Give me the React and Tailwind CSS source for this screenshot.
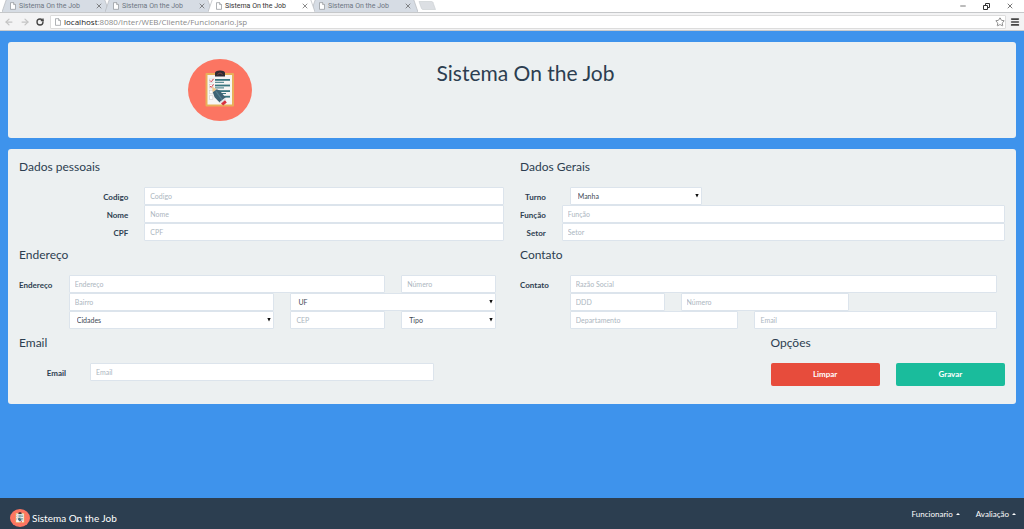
import { Menu, Minus, RotateCw, Star, X, ArrowLeft, ArrowRight } from 'lucide-react'
import clsx from 'clsx'

const TABS = [
  { id: 1, active: false },
  { id: 2, active: false },
  { id: 3, active: true },
  { id: 4, active: false },
]

const CONTROL =
  'block h-[18px] w-full min-w-0 rounded-[1px] border border-[#dce4ec] bg-white text-[7px] leading-4 text-[#3f4a55] outline-none'

function PageIcon({ className }) {
  return (
    <svg viewBox="0 0 7 9" className={className} fill="#fff" stroke="#8b8f94" strokeWidth="0.8" aria-hidden="true">
      <path d="M.6.6h3.6L6.4 2.8v5.6H.6z" />
      <path d="M4.2.6v2.2h2.2" />
    </svg>
  )
}

function RestoreIcon({ className }) {
  return (
    <svg viewBox="0 0 7 7" className={className} fill="none" stroke="currentColor" strokeWidth="1" aria-hidden="true">
      <path d="M2.5 2V.5h4v4H5" />
      <path d="M.5 2.5h4v4h-4z" />
    </svg>
  )
}

function Logo({ className }) {
  return (
    <svg viewBox="0 0 64 62" preserveAspectRatio="none" className={className} aria-hidden="true">
      <ellipse cx="32" cy="31" rx="32" ry="31" fill="#fc7562" />
      <rect x="17.5" y="14" width="28.5" height="33.5" rx="1" fill="#e9b05a" />
      <rect x="19.5" y="16" width="24.5" height="29.5" fill="#f6f5f4" />
      <path d="M27 17.5v-3.4q0-2.6 5-2.6t5 2.6v3.4z" fill="#2e2b33" />
      <path d="M29.4 15.4q2.6-3 5.2 0" fill="none" stroke="#8d4a47" strokeWidth="0.9" />
      <g fill="#38757f">
        <rect x="27" y="20" width="15" height="1.8" />
        <rect x="27" y="22.8" width="9" height="1" />
        <rect x="27" y="25.6" width="15" height="1.8" />
        <rect x="27" y="28.4" width="9" height="1" />
        <rect x="29" y="31.2" width="13" height="1.8" />
        <rect x="33" y="34" width="5" height="1" />
        <rect x="34" y="36.8" width="8" height="1.8" />
      </g>
      <g fill="#fff" stroke="#c9c4c8" strokeWidth="0.5">
        <rect x="21.5" y="20" width="3.4" height="3.4" />
        <rect x="21.5" y="25.6" width="3.4" height="3.4" />
        <rect x="21.5" y="31.2" width="3.4" height="3.4" />
        <rect x="21.5" y="36.8" width="3.4" height="3.4" />
      </g>
      <path d="M22 21.4l1.2 1.4 2.4-3M22 27l1.2 1.4 2.4-3" fill="none" stroke="#d8434e" strokeWidth="1" />
      <path d="M24 27.6l.8 5.6 4-2.6z" fill="#f0c98d" />
      <path d="M24.8 33.2l4-3 3.2 1.6 5.6 7-6 4.6-5-5.2z" fill="#3f6375" />
      <path d="M28 32.4l6.2 8.4" stroke="#527c8d" strokeWidth="1.2" />
      <path d="M31.4 43.2l5.4-4.2 1.2 1.8-4.8 3.8z" fill="#dfe3e5" />
      <path d="M33 44.4l4-3.2 1.8 2.4-3.6 2.8z" fill="#d8323f" />
    </svg>
  )
}

function Tab({ active }) {
  return (
    <button type="button" className={clsx('relative -ml-1 flex h-[13px] w-[107px] items-center pr-1.5 pl-2 text-left', active && 'z-10')}>
      <svg viewBox="0 0 107 13" preserveAspectRatio="none" className="absolute inset-0 h-full w-full" aria-hidden="true">
        <path
          d="M0 13L4 1.4Q4.4.5 5.4.5H101.6Q102.6.5 103 1.4L107 13"
          fill={active ? '#fff' : '#d6dce4'}
          stroke="#b4b8bd"
          strokeWidth="0.7"
        />
      </svg>
      <PageIcon className="relative h-2 w-1.5 shrink-0" />
      <span className={clsx('relative ml-[3px] flex-1 whitespace-nowrap text-[7px] leading-3', active ? 'text-[#333]' : 'text-[#6d7682]')}>
        Sistema On the Job
      </span>
      <X className="relative h-2 w-2 shrink-0 text-[#555]" />
    </button>
  )
}

function BrowserBar() {
  return (
    <header className="shrink-0">
      <div className="flex h-[13px] items-end justify-between border-b border-[#c6c8ca] bg-white font-['Roboto',sans-serif]">
        <div className="flex pl-1.5">
          {TABS.map((tab) => (
            <Tab key={tab.id} active={tab.active} />
          ))}
          <svg viewBox="0 0 18 9" className="mt-0.5 h-[9px] w-[18px]" aria-hidden="true">
            <path d="M1 .5h12.5q1 0 1.4.8L17.5 8.5H5q-1 0-1.5-1z" fill="#dcdfe3" stroke="#c8ccd0" strokeWidth="0.6" />
          </svg>
        </div>
        <div className="flex items-center gap-4 self-center pr-2.5 text-[#333]">
          <button type="button" aria-label="Minimizar"><Minus className="h-2 w-2" /></button>
          <button type="button" aria-label="Restaurar"><RestoreIcon className="h-[7px] w-[7px]" /></button>
          <button type="button" aria-label="Fechar"><X className="h-2 w-2" /></button>
        </div>
      </div>
      <div className="flex h-[18px] items-center border-b border-[#c9cbcd] bg-[#f3f3f4] pl-1 font-['Open_Sans','Noto_Sans',sans-serif]">
        <button type="button" aria-label="Voltar" className="mr-1.5 text-[#c4c4c4]"><ArrowLeft className="h-2.5 w-2.5" strokeWidth={3} /></button>
        <button type="button" aria-label="Avançar" className="mr-1.5 text-[#c4c4c4]"><ArrowRight className="h-2.5 w-2.5" strokeWidth={3} /></button>
        <button type="button" aria-label="Recarregar" className="mr-1.5 text-[#444]"><RotateCw className="h-2 w-2" strokeWidth={4} /></button>
        <div className="flex h-[14px] flex-1 items-center rounded-[1px] border border-[#dcdcdc] bg-white pl-1">
          <PageIcon className="h-2 w-1.5" />
          <span className="ml-[3px] flex-1 text-[8px] leading-3 text-[#8a8a8a]">
            <span className="text-[#222]">localhost</span>:8080/Inter/WEB/Cliente/Funcionario.jsp
          </span>
          <Star className="h-2.5 w-2.5 text-[#777]" strokeWidth={2} />
        </div>
        <button type="button" aria-label="Menu" className="px-1 text-[#444]"><Menu className="h-2.5 w-2.5" strokeWidth={4} /></button>
      </div>
    </header>
  )
}

function Heading({ children }) {
  return <h2 className="mb-2.5 text-[12px] leading-5 text-[#2c3e50]">{children}</h2>
}

function Label({ htmlFor, className, children }) {
  return (
    <label htmlFor={htmlFor} className={clsx('pt-[3px] text-[8px] leading-[14px] font-bold whitespace-nowrap text-[#2c3e50]', className)}>
      {children}
    </label>
  )
}

function Field({ id, placeholder, className }) {
  return (
    <div className={className}>
      <input id={id} type="text" placeholder={placeholder} aria-label={placeholder} className={clsx(CONTROL, 'px-[5px] placeholder:text-[#acb6c0]')} />
    </div>
  )
}

function Select({ id, label, className }) {
  return (
    <div className={clsx('relative', className)}>
      <select id={id} aria-label={label} className={clsx(CONTROL, 'appearance-none px-[7px]')}>
        <option>{label}</option>
      </select>
      <svg viewBox="0 0 4 4" className="pointer-events-none absolute top-[7px] right-[3px] h-1 w-1" fill="#111" aria-hidden="true">
        <path d="M.3 0h3.4L2 3.6z" />
      </svg>
    </div>
  )
}

function DadosPessoais() {
  return (
    <section>
      <Heading>Dados pessoais</Heading>
      <div className="grid grid-cols-12 gap-x-4">
        <Label htmlFor="codigo" className="col-span-3 text-right">Codigo</Label>
        <Field id="codigo" placeholder="Codigo" className="col-span-9" />
        <Label htmlFor="nome" className="col-span-3 text-right">Nome</Label>
        <Field id="nome" placeholder="Nome" className="col-span-9" />
        <Label htmlFor="cpf" className="col-span-3 text-right">CPF</Label>
        <Field id="cpf" placeholder="CPF" className="col-span-9" />
      </div>
    </section>
  )
}

function DadosGerais() {
  return (
    <section>
      <Heading>Dados Gerais</Heading>
      <div className="grid grid-cols-12 gap-x-4">
        <Label htmlFor="turno" className="text-right">Turno</Label>
        <div className="col-span-11 grid grid-cols-12 gap-x-4 px-2">
          <Select id="turno" label="Manha" className="col-span-4" />
        </div>
        <Label htmlFor="funcao" className="text-right">Função</Label>
        <Field id="funcao" placeholder="Função" className="col-span-11" />
        <Label htmlFor="setor" className="text-right">Setor</Label>
        <Field id="setor" placeholder="Setor" className="col-span-11" />
      </div>
    </section>
  )
}

function Endereco() {
  return (
    <section>
      <Heading>Endereço</Heading>
      <div className="grid grid-cols-12 gap-x-4">
        <Label htmlFor="endereco">Endereço</Label>
        <div className="col-span-11 grid grid-cols-12 gap-x-4 px-2">
          <Field id="endereco" placeholder="Endereço" className="col-span-9" />
          <Field id="numero" placeholder="Número" className="col-span-3" />
          <Field id="bairro" placeholder="Bairro" className="col-span-6" />
          <Select id="uf" label="UF" className="col-span-6" />
          <Select id="cidades" label="Cidades" className="col-span-6" />
          <Field id="cep" placeholder="CEP" className="col-span-3" />
          <Select id="tipo" label="Tipo" className="col-span-3" />
        </div>
      </div>
    </section>
  )
}

function Contato() {
  return (
    <section>
      <Heading>Contato</Heading>
      <div className="grid grid-cols-12 gap-x-4">
        <Label htmlFor="razao">Contato</Label>
        <div className="col-span-11 grid grid-cols-12 gap-x-4 px-2">
          <Field id="razao" placeholder="Razão Social" className="col-span-12" />
          <Field id="ddd" placeholder="DDD" className="col-span-3" />
          <Field id="telefone" placeholder="Número" className="col-span-5" />
          <Field id="departamento" placeholder="Departamento" className="col-span-5 col-start-1" />
          <Field id="email-contato" placeholder="Email" className="col-span-7" />
        </div>
      </div>
    </section>
  )
}

function FooterLink({ children }) {
  return (
    <a href="#" className="flex items-center gap-[3px]">
      {children}
      <svg viewBox="0 0 4 2" className="h-0.5 w-1" fill="currentColor" aria-hidden="true">
        <path d="M0 2L2 0l2 2z" />
      </svg>
    </a>
  )
}

export default function App() {
  return (
    <div className="flex min-h-screen flex-col bg-[#3e93ec] font-['Lato',sans-serif]">
      <BrowserBar />

      <main className="flex flex-1 flex-col gap-[11px] px-2 pt-[11px] pb-6">
        <div className="grid grid-cols-12 gap-x-4 rounded-[3px] bg-[#ecf0f1] px-[11px] py-[17px]">
          <div className="col-span-5 flex justify-center">
            <Logo className="h-[62px] w-16" />
          </div>
          <h1 className="col-span-7 text-[21px] leading-7 text-[#2c3e50]">Sistema On the Job</h1>
        </div>

        <form className="rounded-[3px] bg-[#ecf0f1] px-[11px] pt-2 pb-[18px]" onSubmit={(e) => e.preventDefault()}>
          <div className="grid grid-cols-2 gap-x-4 gap-y-1">
            <DadosPessoais />
            <DadosGerais />
            <Endereco />
            <Contato />
          </div>
          <div className="mt-1 grid grid-cols-12 gap-x-4">
            <section className="col-span-6">
              <Heading>Email</Heading>
              <div className="flex gap-6">
                <Label htmlFor="email" className="w-[47px] text-right">Email</Label>
                <Field id="email" placeholder="Email" className="w-[71%]" />
              </div>
            </section>
            <section className="col-span-3 col-start-10">
              <Heading>Opções</Heading>
              <div className="grid grid-cols-2 gap-4 text-[8px] leading-[23px] font-bold text-white">
                <button type="reset" className="rounded-[2px] bg-[#e74c3c]">Limpar</button>
                <button type="submit" className="rounded-[2px] bg-[#1abc9c]">Gravar</button>
              </div>
            </section>
          </div>
        </form>
      </main>

      <footer className="flex h-[31px] shrink-0 items-end justify-between bg-[#2c3e50] pr-2 pl-2.5 text-white">
        <a href="#" className="flex items-center gap-0.5 pb-0.5 text-[10px] leading-[18px]">
          <Logo className="h-[18px] w-5" />
          Sistema On the Job
        </a>
        <nav className="flex gap-4 pb-2 text-[8px] leading-[14px]">
          <FooterLink>Funcionario</FooterLink>
          <FooterLink>Avaliação</FooterLink>
        </nav>
      </footer>
    </div>
  )
}
